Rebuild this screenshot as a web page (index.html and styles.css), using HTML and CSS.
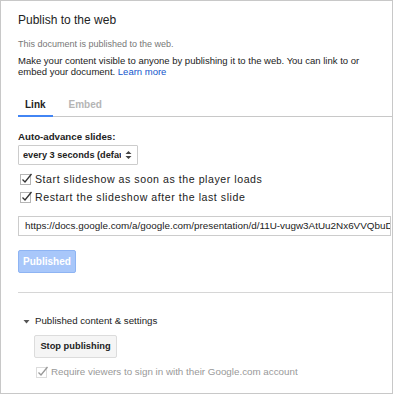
FILE: index.html
```html
<!DOCTYPE html>
<html>
<head>
<meta charset="utf-8">
<link rel="stylesheet" href="styles.css">
</head>
<body>
<div class="dialog">
  <h1 class="title">Publish to the web</h1>
  <p class="status">This document is published to the web.</p>
  <p class="intro">Make your content visible to anyone by publishing it to the web. You can link to or embed your document. <a class="link" href="#">Learn more</a></p>

  <div class="tabs">
    <div class="tab active">Link</div>
    <div class="tab">Embed</div>
  </div>

  <div class="label">Auto-advance slides:</div>
  <div class="select">
    <span class="select-text">every 3 seconds (default)</span>
    <svg class="select-arrows" width="7" height="10" viewBox="0 0 7 10"><path d="M0.5 4 L3.5 1 L6.5 4 Z M0.5 6 L3.5 9 L6.5 6 Z" fill="#444"/></svg>
  </div>

  <div class="check-row">
    <svg class="check" width="13" height="12" viewBox="0 0 13 12"><rect x="0.5" y="1.5" width="10" height="10" fill="#fff" stroke="#b5b5b5"/><path d="M2.5 6.5 L5 9 L11.5 1" fill="none" stroke="#333" stroke-width="1.3"/></svg>
    <span>Start slideshow as soon as the player loads</span>
  </div>
  <div class="check-row">
    <svg class="check" width="13" height="12" viewBox="0 0 13 12"><rect x="0.5" y="1.5" width="10" height="10" fill="#fff" stroke="#b5b5b5"/><path d="M2.5 6.5 L5 9 L11.5 1" fill="none" stroke="#333" stroke-width="1.3"/></svg>
    <span>Restart the slideshow after the last slide</span>
  </div>

  <div class="url">https://docs.google.com/a/google.com/presentation/d/11U-vugw3AtUu2Nx6VVQbuDk</div>

  <div class="btn-published">Published</div>

  <div class="sep"></div>

  <div class="section-head">
    <svg class="caret" width="7" height="5" viewBox="0 0 7 5"><path d="M0.5 1 L6.5 1 L3.5 4.5 Z" fill="#555"/></svg>
    <span>Published content &amp; settings</span>
  </div>
  <div class="btn-stop">Stop publishing</div>
  <div class="check-row disabled">
    <svg class="check" width="13" height="12" viewBox="0 0 13 12"><rect x="0.5" y="1.5" width="10" height="10" fill="#fff" stroke="#dcdcdc"/><path d="M2.5 6.5 L5 9 L11.5 1" fill="none" stroke="#999" stroke-width="1.3"/></svg>
    <span>Require viewers to sign in with their Google.com account</span>
  </div>
</div>
</body>
</html>
```
FILE: styles.css
```css
html, body {
  margin: 0;
  padding: 0;
  background: #fff;
}
body {
  font-family: "Liberation Sans", Arial, sans-serif;
  color: #222;
}
.dialog {
  box-sizing: border-box;
  width: 393px;
  height: 394px;
  border: 1px solid #c8c8c8;
  padding: 0 0 0 17px;
  overflow: hidden;
}
.title {
  font-size: 12px;
  font-weight: normal;
  margin: 12px 0 0 0;
  line-height: 14px;
  color: #222;
}
.status {
  margin: 12px 0 0 0;
  font-size: 9px;
  line-height: 11px;
  color: #777;
}
.intro {
  margin: 5px 0 0 0;
  font-size: 9.5px;
  line-height: 11px;
  color: #222;
  padding-right: 16px;
}
.link {
  color: #15c;
  text-decoration: none;
}
.tabs {
  display: flex;
  margin-top: 22px;
  border-bottom: 1px solid #c8c8c8;
}
.tab {
  font-size: 10px;
  font-weight: bold;
  color: #b5b5b5;
  padding: 0 7px 4px 7px;
  margin-right: 9px;
  line-height: 12px;
  margin-bottom: -1px;
  border-bottom: 2px solid transparent;
}
.tab.active {
  color: #222;
  border-bottom-color: #4285f4;
}
.label {
  margin-top: 14px;
  font-size: 9.7px;
  font-weight: bold;
  line-height: 12px;
}
.select {
  margin-top: 2px;
  box-sizing: border-box;
  width: 120px;
  height: 20px;
  border: 1px solid #ccc;
  border-radius: 1px;
  display: flex;
  align-items: center;
  padding: 0 5px 0 4px;
  background: #fff;
}
.select-text {
  flex: 1;
  overflow: hidden;
  white-space: nowrap;
  font-size: 9.2px;
  font-weight: bold;
  color: #222;
}
.select-arrows {
  flex: none;
  margin-left: 4px;
}
.check-row {
  display: flex;
  align-items: center;
  margin-top: 6px;
  font-size: 10.6px;
  letter-spacing: 0.55px;
  line-height: 12px;
  height: 12px;
  color: #222;
}
.select + .check-row {
  margin-top: 8px;
}
.check {
  flex: none;
  margin-left: 2px;
  margin-right: 2px;
}
.url {
  margin-top: 13px;
  box-sizing: border-box;
  width: 373px;
  height: 20px;
  border: 1px solid #ccc;
  padding: 0 6px;
  font-size: 9.9px;
  line-height: 18px;
  white-space: nowrap;
  overflow: hidden;
  color: #222;
}
.btn-published {
  margin-top: 14px;
  box-sizing: border-box;
  width: 58px;
  height: 23px;
  background: #a8c7fa;
  border: 1px solid #8eb4f3;
  border-radius: 2px;
  color: #fff;
  font-size: 10px;
  font-weight: bold;
  line-height: 21px;
  text-align: center;
}
.sep {
  margin-top: 19px;
  height: 1px;
  background: #d6d6d6;
}
.section-head {
  margin-top: 22px;
  display: flex;
  align-items: center;
  font-size: 9.7px;
  line-height: 12px;
  color: #222;
  padding-left: 5px;
}
.caret {
  margin-right: 5px;
}
.btn-stop {
  margin: 8px 0 0 16px;
  box-sizing: border-box;
  width: 83px;
  height: 23px;
  background: #f5f5f5;
  border: 1px solid #dcdcdc;
  border-radius: 2px;
  font-size: 9.3px;
  font-weight: bold;
  line-height: 21px;
  text-align: center;
  color: #222;
}
.check-row.disabled {
  margin-top: 8px;
  padding-left: 16px;
  font-size: 9.8px;
  letter-spacing: 0;
  color: #999;
}
```
